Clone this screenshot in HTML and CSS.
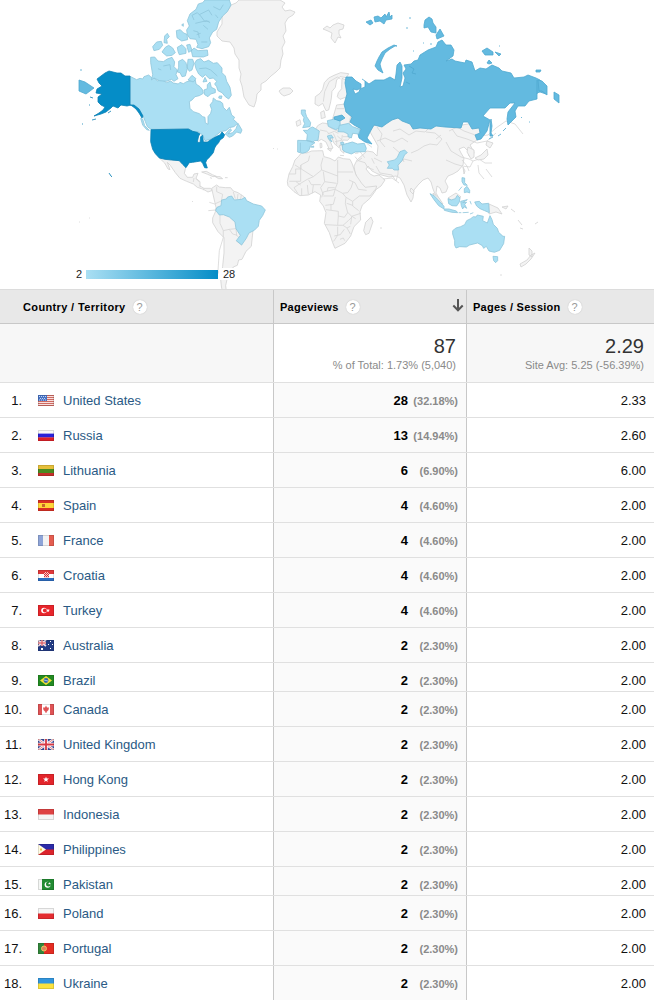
FILE: index.html
```html
<!DOCTYPE html>
<html lang="en">
<head>
<meta charset="utf-8">
<title>Country / Territory</title>
<link rel="stylesheet" href="styles.css">
</head>
<body>
<main class="report">
<svg class="map" viewBox="0 0 655 289" width="655" height="289" role="img" aria-label="World map">
  <defs><linearGradient id="scale"><stop offset="0" stop-color="#aadff3"/><stop offset="1" stop-color="#058dc7"/></linearGradient></defs>
  <!-- Greenland, Iceland, Svalbard -->
  <g class="land">
    <path d="M239 0L236 3 231 5 229 9 225 11 222 17 222 24 217 32 217 36 222 41 230 42 234 48 235 54 239 60 239 68 241 74 240 80 242 86 244 97 249 105 254 107 256 101 257 94 261 90 261 84 266 81 271 76 276 72 280 68 281 60 283 54 282 48 285 42 283 36 286 31 285 23 288 18 293 15 295 12 290 10 285 11 282 7 285 3 280 0z"/>
    <path d="M279 91l4-3 7 0 3 3-3 3-6 2-3-2z"/>
    <path d="M323 29l4-3 3 2 3-3 5-2 6 2-1 4-4 1 0 4 2 4-3-1-3 6-4-5 1-5-4-2z"/>
  </g>
  <!-- Asia and Arabia -->
  <g class="land">
    <path d="M369 130l6-5 5-6 13-2 37 8 32 0 18-3 8 3-6 12-8 5-4 3 4 7-1 5-4-1-1-5-4-4-5 2 2 4 3 5-1 7-5 6-5 3-5 2-3 5 3 6-2 5-4 1-2-5-3-2-1 7 4 7 2 5-4-4-5-12-2-7-3-4-5 2-5 5-4 5-1 8-2 4-4-7-3-10-4-7-4-2-7 1-11-3-6-3-4-5-2 3 4 5 4 2 5-1 6 5-4 6-7 5-9 4-6-11-4-12-1-6 3-6 10-9 6 1 4 4 1-10z"/>
    <path class="line" d="M377 127l5 7-2 7 5 6m-8-6l8-3 9 4 8-4 6 4m-15-11l7-2 9 6 7-4 9 1 6-6-2-9m-3 15l9 1 7 6-5 6-7-1-6 2-6 4-7 3m25-14l5-4m8-4l8-4 7 4 14 5 10-1 8-7 10-7 9 3 8 10m-71-5l5 7 10 3 10 4 10-2 9-8m-50 9l5 9 10 6 8 2 4 2-3 6-8-1-7-2-9-4m16 0l5 6 2 5m4-10l6-2 6 4 7 0m-14 2l1 8 5 6m2-10l6 8m-80-16l-8-2-6 6 0 9-2 7-4-6-12-2-4-7m28-4l-3-8-8-7m-11 15l-8-4m9 21l9-1 7 5"/>
    <path d="M468 147l6 3 0 7-3 2-4-7zM487 141l6 2-3 5-4-3zM487 149l1 6-4 4-6 1-3-2 6-3 3-3zM463 167l2 4-1 3zM411 188l3 3-1 3-3-3z"/>
    <path d="M433 193l6 5 4 6-4-1-5-6z"/>
  </g>
  <!-- Africa -->
  <g class="land" transform="translate(280 80) scale(.3333)">
    <path d="M65 218L80 219 95 213 128 212 132 230 150 235 165 243 175 231 190 236 210 238 216 250 228 285 245 310 256 322 290 318 286 333 270 355 247 375 240 395 242 420 222 440 212 468 195 490 165 505 158 488 148 458 133 430 138 398 130 378 119 364 122 345 105 335 85 345 60 347 42 335 24 317 22 305 27 282 38 260 45 240 55 230z"/>
    <path class="line" d="M27 282h20v-15h16v-12l22-12 4-16M45 255l55 35 25-20-2-15 6-22M62 255v49H28M100 290l-18 8-25 15-15 10 12 18M125 270l48 18V240M173 288v20l-8 20M173 276h46M130 275l4 30-12 18 8 22M86 300l8 14h28M82 315l3 28M65 325v20M100 315l-3 25M134 305l36 5M165 328l23 12 15-2 10-14 6-18M165 328l-35 8-5 16M188 340l10 12 20 12 20-16 32 0 16-20M218 364v14l18 14M198 352l-2 18 7 28-10 14-18-4v-14l-37-5M130 348h30l5-18M136 376l24-3 6-22M175 408l-2 28-38-2M173 436h16l16-14 12-12 10 6M203 397l12 12 27-9M189 436l12 8 10-5M173 440v26l-12 18M163 468l18-4 12-16M201 444l10 18M215 409l-3 24M180 478l10-4 4 8M207 300l18 8 10 20 25 3M200 370l18 6M142 333l2-10 20 0M153 390v-18M48 305l14 10"/>
    <path d="M273 411l6 14-12 35-10 4-6-12 6-25z"/>
  </g>
  <!-- Europe -->
  <g class="land" transform="translate(280 80) scale(.3333)">
    <path d="M105 72l1-22 14-10 8-12 5-20 13-14 16-8 20-8 24 3-6 12-20-3-10 10-4 22-10 12-2 20-2 12-6 24-8 2-10-22-12 8z"/>
    <path class="line" d="M130 65l4-30 14-30 24-14 10 6"/>
    <path d="M186-5l12 5 4 50-22 8-8-8 3-12 10-12z"/>
    <path d="M122 97l10-5 4 20-12 4z"/>
    <path d="M170 75l26-3 2 22 14 15-4 22 15 22-13 20-7 8-14-1-4 10-8 13-15-13-7-18-8 4 12 28-10 6-11-24-14-8-10 6-7-14-2-18 8-15 14-8 27 3 4-16z"/>
    <path class="line" d="M170 86h22M120 150l20 4 8 8M140 132l12 12 24 10M143 162l20-8 12 6M165 185l20-4 2-16M160 160l10 22 0 12M188 170l18 0M172 168l14 12"/>
    <path d="M178 196l12 2 2 22-10-8zM48 125l12-6 3 14-12 6zM120 190l5 0 1 12-5 2zM142 206l12 0-2 8zM180 226l12 1M225 220l10-1"/>
    <path class="line" d="M225 230l10 12 20 6 8 15 18 6M240 215l14 18M260 190l16 12M275 235l8 16M232 244l14-10"/>
  </g>
  <!-- Mexico, Central America, South America -->
  <g class="land" transform="translate(70 120) scale(.3333)">
    <path d="M268 114l37 6 23 2 10 11 9 10-4 17 9 12 16 0 4-10 12-2-6 15 12 10 0 13 12 7 20 0 6 6-14 5-14-8-18-6-12-10-20-8-20-9-14-17-15-22-9-9 8 22-6-2-10-18z"/>
    <path class="line" d="M370 186l2-12M378 176l10 10M388 198l4 2M402 205l-2 6"/>
    <path d="M395 156l14-2 18 10 12 5-10 1-16-7zM436 170l14 0 8 6-12 0zM465 173l8 0M420 173l6 2"/>
    <path d="M425 205l15-10 8 6 18 2 16 0 8 10 14 5 18 12 4 12 20 10 5 60-7 67-16 15-12 24-10 2-4 16-12 5-10 18-9 20-4 18 2 16 14 6-16 1-12-15-3-26 6-40 4-40 0-46-18-18-16-27 0-14 8-18 2-14z"/>
    <path class="line" d="M440 200l0 15 18 8-4 20M456 242l-22 10-16-5M437 270l-22 2M450 285v25l10 22 0 20-12 40-4 60 8 20M460 332l18-4 20-2 2 20 8 8M478 328l10 14 14 4M490 216l6 20M504 222l-2 16M514 224l-2 14M498 362l18 14"/>
  </g>
  <!-- Oceania without data -->
  <g class="land">
    <path d="M489 204l9 4 4 6-6-2-7 2zM502 207l6-1-2 3zM511 209l4 3M518 220l4 5M520 228l3 1M535 224l3-2M529 248l3 3 0 6-3-2zM531 255l4-2-4 6-5 5-5 3-1-3 7-4zM448 198l8-5 5 4-8 4z"/>
    <path class="line" d="M192 201l1 1M79 222l1 0M89 218h1M273 148l1 1M277 149h1M380 228h2M500 275h2"/>
  </g>
  <!-- Canada -->
  <g class="light" transform="translate(70 0) scale(.3333)">
    <path d="M180 229L200 239 210 235 218 237 222 230 236 225 246 234 256 236 262 243 276 239 290 248 302 243 310 249 325 252 330 247 340 251 350 245 362 243 368 232 376 240 378 252 390 260 398 270 400 280 388 287 375 290 366 300 358 305 360 325 370 335 388 341 398 350 405 352 406 368 414 373 414 350 422 340 425 328 420 315 428 305 430 294 440 302 450 304 458 310 460 322 470 332 478 322 485 345 494 352 490 358 503 370 492 380 478 383 468 392 452 395 440 405 425 417 405 422 398 405 384 395 375 398 358 388 243 388 232 380 226 365 220 350 205 332 195 322 180 315z"/>
    <path d="M466 402L480 386 485 390 474 402 488 398 498 386 504 370 516 390 512 400 500 396 488 408 478 412 470 406z"/>
    <path d="M405 0L398 8 385 12 378 28 360 42 352 62 358 78 350 90 352 104 360 116 378 118 384 134 380 142 396 146 416 140 422 128 418 114 428 96 440 88 446 66 458 48 472 35 483 15 478 0z"/>
    <path d="M335 75l5-4 0 8zM319 92l12-3 10 10 10 4 2 16-18 4-14-10zM284 108l8-8 6 10-8 8 2 12-10-2zM248 140l12-14 14-2 4 12-10 12-16 4zM276 156L286 142 296 136 308 144 316 158 306 166 290 168zM322 142l14-8 12 12 0 14-20 4-4-10zM350 135l10-2 6 18-10 6zM364 152L372 144 384 152 412 150 414 166 400 171 368 170zM242 188l0-16 12-1 10 12 16 2 12-8 14-5 8 14-2 14 10 10-4 14 6 12-12 8-8-6-14 6-22-2-16-8-8 6 4-16zM326 184l12-6 10 10 4 18-6 22-10 2-6-12-8-2 4-14zM354 178l14 0 4 12-6 20-8 4-6-10zM380 180L392 176 402 186 416 181 430 190 442 188 456 204 456 218 466 228 470 244 480 262 484 286 476 297 466 290 456 278 444 272 440 260 434 252 440 244 430 234 418 236 406 224 398 232 386 222 378 206 374 190zM404 284L402 270 412 266 412 254 420 246 424 262 436 268 436 278 422 282 414 290zM354 240l12-14 12 10-8 10zM399 246l6-14 6 12zM212 355l6 2 6 20 14 14-8-2-12-14zM448 288l8 0-2 8-8-2z"/>
    <path class="crease" d="M372 60l-6-14 16-8 10 10 12 16 14 0M376 70l34-8 10 6M388 44l28-14 10 16M370 92l14 4 4 18M430 20l20 10 10-16M394 126l18 0M280 198l20-4 2 16M388 206l20-2 14 6 20 18M400 76l14 12M436 44l8 10M264 206l10 4M380 104l12-4"/>
  </g>
  <!-- United States -->
  <g class="deep">
    <path d="M130 76L125 76 121 73 117 73 113 72 109 71 105 73 101 76 97 79 99 83 102 86 97 89 96 93 102 94 98 97 98 102 101 105 105 107 103 110 99 113 94 116 101 114 106 112 111 108 113 106 118 108 121 105 127 106 131 105 136 109 139 113 142 118 143 116 139 109 134 105 130 105z"/>
    <path d="M92 120l4-1M82 124l1 0M90 97l3 1M89 105h1M108 113l3-2M109 173l2 3 1 1"/>
    <path transform="translate(70 120) scale(.3333)" d="M243 29L355 27 368 34 382 37 390 42 386 48 382 66 390 68 392 50 398 46 400 66 412 66 426 57 440 49 450 45 456 36 464 44 460 53 450 60 446 68 439 76 434 84 430 98 420 110 410 120 407 128 412 144 404 143 398 130 392 123 380 125 368 127 358 128 348 143 338 133 328 122 305 120 285 118 268 114 256 101 248 88 242 65z"/>
  </g>
  <!-- Brazil -->
  <path class="light" transform="translate(70 120) scale(.3333)" d="M455 240l14-3 4-6 12-3 8 12 22-2 10-6 5 10 20 10 25 6 11 12-8 17-10 14-3 18-12 12-16 8-8 16-14 20-16-13 12-16-13-20-3-20-17-15-18-7-12 1-11-14 4-9 12-5z"/>
  <!-- Russia -->
  <g class="mid">
    <path d="M346 77L352 77 356 81 361 84 361 88 357 90 353 89 355 94 359 92 360 89 365 87 365 81 369 84 375 80 384 80 390 77 395 80 396 74 397 65 400 62 402 66 402 78 400 87 403 86 405 78 403 73 406 69 404 65 411 64 414 61 418 60 420 55 428 50 436 47 438 42 442 40 446 45 451 45 454 50 453 56 446 61 452 59 455 61 465 63 466 60 472 62 475 71 480 68 486 69 492 65 499 68 502 71 511 73 514 78 524 77 528 75 536 78 540 80 546 87 546 94 540 92 537 93 537 99 529 101 525 106 518 106 515 111 516 117 508 125 507 119 508 112 515 103 510 103 505 108 490 108 483 116 490 120 487 131 481 139 477 140 475 135 480 133 479 128 472 129 468 122 463 122 461 128 445 127 436 126 431 129 420 128 413 129 410 124 402 121 398 118 392 120 386 124 382 127 374 125 370 132 367 138 372 144 365 142 359 138 358 134 361 129 354 125 350 122 352 117 346 112 344 104 347 94 345 83z"/>
    <path d="M397 46l-3-1-6 3-6 4-3 5-2 4-2 5 3 4 5 3-2-5-1-4 2-5 3-6 5-4 5-3z"/>
    <path d="M366 22l5-2 2 3-3 2zM374 17l4-1 3 2 4-4 1 3 3-5 1 5 2-2 0 4-6 1-2 4-4-3-5 1zM409 18h2M406 28h2M424 25l1-5 4-3 3 2 1 4 3 4 0 6-5-1-3-5-4 1zM436 35l4-6 4 7-7 3zM482 51l5-3 6 4 0 3-8 0zM495 52l6 2-2 2zM487 63l2-3 3 3-3 1zM536 70l5 0-1 2-4 0zM538 80l4 1 5 5 0 9-5-4-3 0zM554 92l5 3 0 8-5-4zM79 80l6 2 9 6-8 6-7-3zM80 70h2M491 119l1 7-1 7 2 3-3 0 0-12zM489 139l4-2M498 136l3-2M503 131l3-3M521 117l1 1M529 122h1M423 43h1M430 44h2M413 51h1M499 46h1"/>
    <path class="crease" d="M409 66l5 3-2 4 4 1M406 82l4 2M537 80l0 14M362 79l3 2"/>
  </g>
  <!-- Europe and Asia with data -->
  <g class="light" transform="translate(280 80) scale(.3333)">
    <path d="M64 90l12 0 0 8 4 12 12 18-2 12-22 3 6-12-4-10 2-8-8-12z"/>
    <path d="M70 151l12 0 10-8 6-2 20 12-4 28-10 1-6 5-18-5 2-18zM53 181l34 1 18 6-14 10-4 12-7 6-12 4-15-4zM61 188v28M92 201l9-3 0 4z"/>
    <path d="M142 122l22-5 16 4 1 22-14 6-22-10z"/>
    <path d="M178 136l28-6 12 10 22 8-4 14-18-2-4 14-10-4 0-8-12-6-18-1z"/>
    <path d="M142 168l12-3 6 9-10 0 6 12-10-8z"/>
    <path d="M187 194l16-4 14-4 16 6 20-2 6 15-3 10-30 1-12 6-18-6-8-6zM182 187l9 0 0 7-8 0z"/>
    <path d="M322 245l22-5 8-8 8-17 14-5 8 8-8 6-8 18-12 14 2 14-14 0-5-5-15 0 6-10z"/>
  </g>
  <path class="mid" d="M334 117l8-2 3 3-5 3-6-2z"/>
  <!-- Indonesia, Philippines, Australia -->
  <g class="light" transform="translate(380 120) scale(.3333)">
    <path d="M150 221l12 6 14 14 16 18 0 8-16-10-14-18zM193 267l14 0 22 6 4 5-18-1-22-6zM236 278l8 0M248 278l18-1M270 282l10-4M204 236l10 4 12-4 6-10 8 8-2 12-8 12-14-1-10-6zM242 244l20-5-14 9 12-1-6 6 6 12-8-5-4 7-4-10zM284 246l14-2 8 8 20-2 2 28-14-6-14-6-10-8zM270 243l4 10M246 173l8 1 0 14 8 8-10-1-6-10zM253 206l8-7 8 12 0 8-8-3-8 2zM236 212l10-12"/>
    <path d="M218 342l0-10 10-8 14-4 12-6 6-12 12-6 8-6 8 1 4-6 18 4-2 13 14 7 8-22 6 12 4 14 12 12 4 12 13 12 5 0-3 22-12 20-16 6-16-4-8-14-8 6-4-8-14-8-24 6-10 6-20-1-11 4-4-8 0-14zM339 409l14 1 0 12-6 6-6-6z"/>
  </g>
  <rect x="86" y="270" width="132" height="9" fill="url(#scale)"/>
  <rect x="219" y="268" width="16" height="12" fill="#fff"/>
  <text class="legend" x="76" y="278">2</text><text class="legend" x="223" y="278">28</text>
</svg>

<svg class="sprites" width="0" height="0" aria-hidden="true">
  <symbol id="star" viewBox="-5 -5 10 10"><path fill="#fff" d="M0-5L1.2-1.6H5L2 .7 3 4.3 0 2-3 4.3-2 .7-5-1.6h3.8z"/></symbol>
  <symbol id="us" viewBox="0 0 16 11"><path fill="#f8dedc" d="M0 0h16v11H0z"/><path stroke="#cf6a62" d="M0 .5h16M0 2.5h16M0 4.5h16M0 6.5h16M0 8.5h16M0 10.5h16"/><path fill="#4672c4" d="M0 0h9v6H0z"/><path stroke="#c4d4f4" stroke-dasharray="1 1" d="M1 1.5h7M2 3.5h6M1 5h7"/></symbol>
  <symbol id="ru" viewBox="0 0 16 11"><path fill="#f8f8f8" d="M0 0h16v4H0z"/><path fill="#2a22d8" d="M0 3.6h16v4H0z"/><path fill="#dc2028" d="M0 7.4h16V11H0z"/></symbol>
  <symbol id="lt" viewBox="0 0 16 11"><path fill="#e5bf3a" d="M0 0h16v4H0z"/><path fill="#4a8a20" d="M0 4h16v4H0z"/><path fill="#c4302b" d="M0 8h16v3H0z"/></symbol>
  <symbol id="es" viewBox="0 0 16 11"><path fill="#d93024" d="M0 0h16v11H0z"/><path fill="#ffd638" d="M0 3h16v5H0z"/><path fill="#c66a2a" d="M4 4h3v3H4z"/></symbol>
  <symbol id="fr" viewBox="0 0 16 11"><path fill="#8ea4d8" d="M0 0h6v11H0z"/><path fill="#f3f3f3" d="M5 0h6v11H5z"/><path fill="#e45d50" d="M11 0h5v11h-5z"/></symbol>
  <symbol id="hr" viewBox="0 0 16 11"><path fill="#e0383a" d="M0 0h16v4H0z"/><path fill="#fff" d="M0 4h16v4H0z"/><path fill="#2d6dc0" d="M0 8h16v3H0z"/><path fill="#f6caca" d="M6 2h5v6H6z"/><path stroke="#d93035" stroke-dasharray="1 1" d="M6 2.5h5M7 3.5h4M6 4.5h5M7 5.5h4M6 6.5h5"/></symbol>
  <symbol id="tr" viewBox="0 0 16 11"><path fill="#e8252b" d="M0 0h16v11H0z"/><circle cx="6" cy="5.5" r="2.8" fill="#fff"/><circle cx="6.9" cy="5.5" r="2" fill="#e8252b"/><use href="#star" x="8" y="3.5" width="4" height="4"/></symbol>
  <symbol id="au" viewBox="0 0 16 11"><path fill="#243c84" d="M0 0h16v11H0z"/><path stroke="#f0d8e0" stroke-width="1.8" d="M0 0l8 6M8 0L0 6M4 0v6M0 3h8"/><path stroke="#d84a50" d="M4 0v6M0 3h8"/><path fill="#fff" d="M3 8h2v2H3zM12 1h1v1h-1zM10 4h1v1h-1zM14 4h1v1h-1zM12 8h1v1h-1z"/></symbol>
  <symbol id="br" viewBox="0 0 16 11"><path fill="#228a22" d="M0 0h16v11H0z"/><path fill="#f3df35" d="M8 1l6 4.5L8 10 2 5.5z"/><circle cx="8" cy="5.5" r="2.4" fill="#3267aa"/><path stroke="#dceaff" stroke-width=".7" d="M6 5l4 1"/></symbol>
  <symbol id="ca" viewBox="0 0 16 11"><path fill="#fff" d="M0 0h16v11H0z"/><path fill="#df5355" d="M0 0h4v11H0zM12 0h4v11h-4zM8 1.5l1 2 2 0-.5 2.5-2 2V9h-1V8l-2-2L5 3.500h2z"/></symbol>
  <symbol id="gb" viewBox="0 0 16 11"><path fill="#3c4c9c" d="M0 0h16v11H0z"/><path stroke="#fff" stroke-width="2.4" d="M0 0l16 11M16 0L0 11"/><path stroke="#dc6870" stroke-width=".8" d="M0 0l16 11M16 0L0 11"/><path stroke="#fff" stroke-width="3.600" d="M8 0v11M0 5.500h16"/><path stroke="#d83a46" stroke-width="1.800" d="M8 0v11M0 5.500h16"/></symbol>
  <symbol id="hk" viewBox="0 0 16 11"><path fill="#e3252b" d="M0 0h16v11H0z"/><use href="#star" x="5" y="2.500" width="6" height="6"/></symbol>
  <symbol id="id" viewBox="0 0 16 11"><path fill="#f5f5f5" d="M0 0h16v11H0z"/><path fill="#de4243" d="M0 0h16v5.500H0z"/></symbol>
  <symbol id="ph" viewBox="0 0 16 11"><path fill="#2b2ba8" d="M0 0h16v6H0z"/><path fill="#dc242c" d="M0 5.500h16V11H0z"/><path fill="#fffbe2" d="M0 0l8 5.500L0 11z"/><path fill="#ecc742" d="M2 4.500h2v2H2z"/></symbol>
  <symbol id="pk" viewBox="0 0 16 11"><path fill="#f4f6f4" d="M0 0h4v11H0z"/><path fill="#218b32" d="M4 0h12v11H4z"/><circle cx="9.600" cy="5.800" r="3" fill="#fff"/><circle cx="10.500" cy="5" r="2.500" fill="#218b32"/><use href="#star" x="10" y="3" width="3" height="3"/></symbol>
  <symbol id="pl" viewBox="0 0 16 11"><path fill="#f5f5f5" d="M0 0h16v6H0z"/><path fill="#e32c30" d="M0 5.500h16V11H0z"/></symbol>
  <symbol id="pt" viewBox="0 0 16 11"><path fill="#31853a" d="M0 0h6v11H0z"/><path fill="#e42c22" d="M6 0h10v11H6z"/><circle cx="6" cy="5.500" r="2.500" fill="#df8158" stroke="#f0c060"/></symbol>
  <symbol id="ua" viewBox="0 0 16 11"><path fill="#3296dd" d="M0 0h16v6H0z"/><path fill="#fbe23e" d="M0 5.500h16V11H0z"/></symbol>
</svg>

<section class="table">
  <div class="row head">
    <div class="cell place"><span class="label name">Country / Territory</span><span class="help">?</span></div>
    <div class="cell views"><span class="label">Pageviews</span><span class="help">?</span><svg class="sort" viewBox="0 0 12 13" width="12" height="13"><path d="M6 0v11M1.300 6.500L6 11.300l4.700-4.800" fill="none" stroke="#555" stroke-width="2"/></svg></div>
    <div class="cell pages"><span class="label session">Pages / Session</span><span class="help">?</span></div>
  </div>
  <div class="row total">
    <div class="cell place"></div>
    <div class="cell views"><strong class="big">87</strong><span class="note">% of Total: 1.73% (5,040)</span></div>
    <div class="cell pages"><strong class="big">2.29</strong><span class="note">Site Avg: 5.25 (-56.39%)</span></div>
  </div>
  <div class="row"><div class="cell place"><span class="num">1.</span><svg class="flag"><use href="#us"/></svg><a>United States</a></div><div class="cell views"><b>28</b><span class="pct">(32.18%)</span></div><div class="cell pages">2.33</div></div>
  <div class="row"><div class="cell place"><span class="num">2.</span><svg class="flag"><use href="#ru"/></svg><a>Russia</a></div><div class="cell views"><b>13</b><span class="pct">(14.94%)</span></div><div class="cell pages">2.60</div></div>
  <div class="row"><div class="cell place"><span class="num">3.</span><svg class="flag"><use href="#lt"/></svg><a>Lithuania</a></div><div class="cell views"><b>6</b><span class="pct">(6.90%)</span></div><div class="cell pages">6.00</div></div>
  <div class="row"><div class="cell place"><span class="num">4.</span><svg class="flag"><use href="#es"/></svg><a>Spain</a></div><div class="cell views"><b>4</b><span class="pct">(4.60%)</span></div><div class="cell pages">2.00</div></div>
  <div class="row"><div class="cell place"><span class="num">5.</span><svg class="flag"><use href="#fr"/></svg><a>France</a></div><div class="cell views"><b>4</b><span class="pct">(4.60%)</span></div><div class="cell pages">2.00</div></div>
  <div class="row"><div class="cell place"><span class="num">6.</span><svg class="flag"><use href="#hr"/></svg><a>Croatia</a></div><div class="cell views"><b>4</b><span class="pct">(4.60%)</span></div><div class="cell pages">2.00</div></div>
  <div class="row"><div class="cell place"><span class="num">7.</span><svg class="flag"><use href="#tr"/></svg><a>Turkey</a></div><div class="cell views"><b>4</b><span class="pct">(4.60%)</span></div><div class="cell pages">2.00</div></div>
  <div class="row"><div class="cell place"><span class="num">8.</span><svg class="flag"><use href="#au"/></svg><a>Australia</a></div><div class="cell views"><b>2</b><span class="pct">(2.30%)</span></div><div class="cell pages">2.00</div></div>
  <div class="row short"><div class="cell place"><span class="num">9.</span><svg class="flag"><use href="#br"/></svg><a>Brazil</a></div><div class="cell views"><b>2</b><span class="pct">(2.30%)</span></div><div class="cell pages">2.00</div></div>
  <div class="row"><div class="cell place"><span class="num">10.</span><svg class="flag"><use href="#ca"/></svg><a>Canada</a></div><div class="cell views"><b>2</b><span class="pct">(2.30%)</span></div><div class="cell pages">2.00</div></div>
  <div class="row"><div class="cell place"><span class="num">11.</span><svg class="flag"><use href="#gb"/></svg><a>United Kingdom</a></div><div class="cell views"><b>2</b><span class="pct">(2.30%)</span></div><div class="cell pages">2.00</div></div>
  <div class="row"><div class="cell place"><span class="num">12.</span><svg class="flag"><use href="#hk"/></svg><a>Hong Kong</a></div><div class="cell views"><b>2</b><span class="pct">(2.30%)</span></div><div class="cell pages">2.00</div></div>
  <div class="row"><div class="cell place"><span class="num">13.</span><svg class="flag"><use href="#id"/></svg><a>Indonesia</a></div><div class="cell views"><b>2</b><span class="pct">(2.30%)</span></div><div class="cell pages">2.00</div></div>
  <div class="row"><div class="cell place"><span class="num">14.</span><svg class="flag"><use href="#ph"/></svg><a>Philippines</a></div><div class="cell views"><b>2</b><span class="pct">(2.30%)</span></div><div class="cell pages">2.00</div></div>
  <div class="row short"><div class="cell place"><span class="num">15.</span><svg class="flag"><use href="#pk"/></svg><a>Pakistan</a></div><div class="cell views"><b>2</b><span class="pct">(2.30%)</span></div><div class="cell pages">2.00</div></div>
  <div class="row"><div class="cell place"><span class="num">16.</span><svg class="flag"><use href="#pl"/></svg><a>Poland</a></div><div class="cell views"><b>2</b><span class="pct">(2.30%)</span></div><div class="cell pages">2.00</div></div>
  <div class="row"><div class="cell place"><span class="num">17.</span><svg class="flag"><use href="#pt"/></svg><a>Portugal</a></div><div class="cell views"><b>2</b><span class="pct">(2.30%)</span></div><div class="cell pages">2.00</div></div>
  <div class="row last"><div class="cell place"><span class="num">18.</span><svg class="flag"><use href="#ua"/></svg><a>Ukraine</a></div><div class="cell views"><b>2</b><span class="pct">(2.30%)</span></div><div class="cell pages">2.00</div></div>
</section>
</main>
</body>
</html>
```
FILE: styles.css
```css
* { box-sizing: border-box; }
body {
  margin: 0;
  background: #fff;
  color: #111;
  font: 13px/16px "Liberation Sans", Arial, sans-serif;
}
.report { width: 655px; height: 1000px; overflow: hidden; }
.map { display: block; }
.map path { vector-effect: non-scaling-stroke; stroke-width: .8; stroke-linejoin: round; }
.land path { fill: #f3f3f3; stroke: #d2d2d2; }
.land .line { fill: none; stroke: #d6d6d6; }
.light, .light path { fill: #aadff3; stroke: #8ec5da; }
.mid, .mid path { fill: #63bae0; stroke: #4fa8cf; }
.light .crease, .mid .crease { fill: none; }
.deep path { fill: #058dc7; stroke: #0b80b4; }
.legend { font-size: 11px; fill: #222; }
.sprites { position: absolute; }

.table { width: 654px; }
.row {
  display: grid;
  grid-template-columns: 274px 193px 187px;
  height: 35px;
  border-bottom: 1px solid #e0e0e0;
}
.short { height: 29px; }
.last { border-bottom: 0; }
.cell { display: flex; align-items: flex-start; padding-top: 10px; }
.place, .views { border-right: 1px solid #c8c8c8; }
.views { background: #fafafa; justify-content: flex-end; padding-right: 8px; }
.pages { justify-content: flex-end; padding-right: 8px; }
.num { width: 22px; text-align: right; }
.flag { width: 16px; height: 11px; margin: 2px 9px 0 16px; outline: 1px solid rgba(0, 0, 0, .12); outline-offset: -1px; }
.place a { color: #2a5a85; }
.views b { color: #000; }
.pct { width: 50px; font-size: 11px; font-weight: bold; color: #8a8a8a; text-align: right; }

.head { border-top: 1px solid #dcdcdc; border-bottom-color: #c8c8c8; background: #e8e8e8; }
.head .cell { background: #e8e8e8; align-items: center; justify-content: flex-start; padding: 0 0 0 6px; }
.head .place { padding-left: 23px; }
.label { padding-top: 1px; font-size: 11px; font-weight: bold; color: #000; letter-spacing: .25px; }
.name { letter-spacing: .36px; }
.help {
  width: 14px;
  height: 14px;
  margin-left: 7px;
  border-radius: 50%;
  background: #fff;
  box-shadow: 0 0 1px #aaa;
  color: #999;
  font-size: 11px;
  line-height: 14px;
  text-align: center;
}
.sort { margin: -2px 2px 0 auto; }

.total { height: 59px; background: #f7f7f7; }
.total .cell { flex-direction: column; align-items: flex-end; justify-content: flex-start; padding: 11px 10px 0 0; }
.total .views { background: #fff; }
.big { font-size: 20px; line-height: 22px; font-weight: normal; color: #333; }
.note { font-size: 11px; line-height: 16px; color: #8a8a8a; }
```
